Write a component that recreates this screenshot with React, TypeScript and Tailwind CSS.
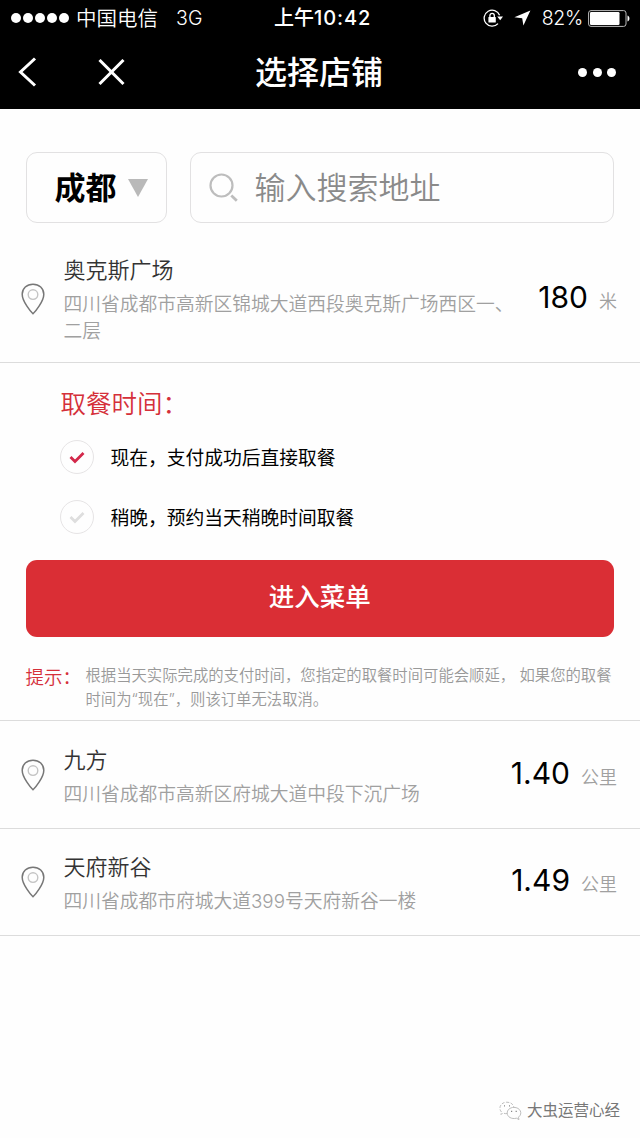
import React from "react";

type Store = {
    name: string;
    address: string;
    distance: string;
    unit: string;
};

const currentStore: Store = {
    name: "奥克斯广场",
    address: "四川省成都市高新区锦城大道西段奥克斯广场西区一、二层",
    distance: "180",
    unit: "米",
};

const nearbyStores: Store[] = [
    {
        name: "九方",
        address: "四川省成都市高新区府城大道中段下沉广场",
        distance: "1.40",
        unit: "公里",
    },
    {
        name: "天府新谷",
        address: "四川省成都市府城大道399号天府新谷一楼",
        distance: "1.49",
        unit: "公里",
    },
];

const pickupOptions = [
    { label: "现在，支付成功后直接取餐", selected: true },
    { label: "稍晚，预约当天稍晚时间取餐", selected: false },
];

function StatusBar() {
    return (
        <div className="flex h-9 items-center text-[20.5px] leading-9">
            <div className="flex w-[274px] items-center pl-[11px]">
                <div className="flex gap-[2px]">
                    {[...Array(5)].map((_, i) => (
                        <span key={i} className="h-[10px] w-[10px] rounded-full bg-white" />
                    ))}
                </div>
                <span className="ml-[7px] pt-px font-[350]">中国电信</span>
                <span className="ml-[18px] text-[19.5px] font-[350] tracking-[0.3px]">3G</span>
            </div>
            <div className="flex-1 text-[20px] font-medium whitespace-nowrap">
                上午<span className="tracking-[0.9px]">10:42</span>
            </div>
            <div className="flex items-center pr-[9px]">
                <svg width="20" height="19" viewBox="0 0 20 19" fill="none">
                    <path d="M16.6 6.2A8 8 0 1 0 15 14.6" stroke="white" strokeWidth="1.3" />
                    <path d="M14.2 7.4h5.8l-2.8 3.8z" fill="white" />
                    <rect x="5.4" y="8" width="7.4" height="5.6" rx="0.6" fill="white" />
                    <path d="M6.9 8.2V6.6a2.2 2.2 0 0 1 4.4 0v1.6" stroke="white" strokeWidth="1.3" />
                </svg>
                <svg className="ml-[11px]" width="17" height="16" viewBox="0 0 17 16">
                    <path d="M16.4 0.4L0.4 7.2L8.2 8.2L9.4 15.6Z" fill="white" />
                </svg>
                <span className="ml-[11px] text-[19.5px] font-[350] tracking-[-0.3px]">82%</span>
                <svg className="ml-[5px]" width="43" height="17" viewBox="0 0 43 17" fill="none">
                    <rect x="0.6" y="0.6" width="37.4" height="15.8" rx="2.4" stroke="#bbb" strokeWidth="1" />
                    <rect x="2" y="2" width="29.5" height="13" rx="1.2" fill="white" />
                    <path d="M39.5 5.5c2.6 0.8 2.6 5.2 0 6z" fill="white" />
                </svg>
            </div>
        </div>
    );
}

function NavBar() {
    return (
        <div className="flex h-[73px] items-center justify-between pr-[23.5px] pl-[17px]">
            <div className="flex w-[210px] items-center">
                <svg width="20" height="32" viewBox="0 0 20 32" fill="none" stroke="white" strokeWidth="3">
                    <path d="M18 1.5L3.5 15L18 28.5" />
                </svg>
                <svg className="ml-[61px]" width="27" height="27" viewBox="0 0 27 27" fill="none" stroke="white" strokeWidth="3">
                    <path d="M1.5 1L25.5 25M25.5 1L1.5 25" />
                </svg>
            </div>
            <h1 className="text-[32px] leading-none font-medium whitespace-nowrap">选择店铺</h1>
            <div className="flex w-[205.5px] justify-end gap-[5.5px] pb-px">
                {[...Array(3)].map((_, i) => (
                    <span key={i} className="h-[9px] w-[9px] rounded-full bg-white" />
                ))}
            </div>
        </div>
    );
}

function PinIcon() {
    return (
        <svg width="24" height="32" viewBox="0 0 24 32" fill="none">
            <path
                d="M12 30.8C10.2 29.2 1.2 18.6 1.2 11.2C1.2 5.4 5.8 1.2 12 1.2S22.8 5.4 22.8 11.2C22.8 18.6 13.8 29.2 12 30.8Z"
                stroke="#777"
                strokeWidth="1.5"
            />
            <circle cx="12" cy="11.6" r="4.8" stroke="#c4c4c4" strokeWidth="1.4" />
        </svg>
    );
}

function StoreRow({ store }: { store: Store }) {
    return (
        <div className="flex items-center pr-[23px] pl-[21px]">
            <div className="pb-[2px]">
                <PinIcon />
            </div>
            <div className="ml-[18.5px] w-[452px]">
                <div className="text-[22px] leading-[32px] font-[350] text-[#333]">{store.name}</div>
                <div className="mt-[5px] text-[18.75px] leading-[27px] font-[350] text-[#a0a0a0]">{store.address}</div>
            </div>
            <div className="flex flex-1 items-baseline justify-end pb-[4px] whitespace-nowrap">
                <span className="text-[30px] leading-[32px] text-black">{store.distance}</span>
                <span className="ml-[11px] text-[18px] font-[350] text-[#a0a0a0]">{store.unit}</span>
            </div>
        </div>
    );
}

function CheckCircle({ selected }: { selected: boolean }) {
    return (
        <span className="flex h-[34px] w-[34px] items-center justify-center rounded-full border-[1.5px] border-[#e6e4e5]">
            <svg width="16" height="13" viewBox="0 0 16 13" fill="none">
                <path d="M1.5 6L6 10.5L14.5 2" stroke={selected ? "#d3284a" : "#dedede"} strokeWidth="2.8" />
            </svg>
        </span>
    );
}

export default function App() {
    return (
        <div className="flex h-[1138px] w-[640px] flex-col overflow-hidden bg-[#fefefe] font-['Inter','Noto_Sans_CJK_SC',sans-serif]">
            <header className="h-[109px] shrink-0 bg-black text-white">
                <StatusBar />
                <NavBar />
            </header>

            {/* City picker and address search */}
            <div className="mt-[43px] flex h-[71px] shrink-0 gap-[22.5px] pr-[26px] pl-[25.5px]">
                <button className="flex w-[141.5px] items-center rounded-[11px] border-[1.5px] border-[#e2e1e2] pl-[28px]">
                    <span className="text-[31px] leading-none font-bold">成都</span>
                    <svg className="ml-[11px]" width="20" height="18" viewBox="0 0 20 18">
                        <path d="M0 0H20L10 18Z" fill="#b9b9b9" />
                    </svg>
                </button>
                <div className="flex flex-1 items-center rounded-[11px] border-[1.5px] border-[#e2e1e2] pl-[18px]">
                    <svg width="30" height="30" viewBox="0 0 30 30" fill="none">
                        <circle cx="12.5" cy="12.5" r="11" stroke="#bdbdbd" strokeWidth="2.2" />
                        <path d="M22.3 22.6L27.8 27.8" stroke="#bdbdbd" strokeWidth="2.8" />
                    </svg>
                    <span className="ml-[16px] text-[31px] leading-none font-[350] text-[#8a8a8a]">输入搜索地址</span>
                </div>
            </div>

            <section className="h-[140px] shrink-0 border-b-[1.5px] border-[#dcdcdc] pt-[31px]">
                <StoreRow store={currentStore} />
            </section>

            {/* Pickup time */}
            <section className="flex h-[358px] shrink-0 flex-col border-b-[1.5px] border-[#dcdcdc] pr-[26px] pl-[25.5px]">
                <h2 className="mt-[23px] flex pl-[35px] text-[25.5px] leading-[36px] font-[350] text-[#d5303a]">
                    <span>取餐时间</span>
                    <span className="[font-feature-settings:'halt']">：</span>
                </h2>
                <div className="mt-[18px] flex flex-col gap-[26px] pl-[34px]">
                    {pickupOptions.map((option) => (
                        <div key={option.label} className="flex h-[34px] items-center gap-[17px]">
                            <CheckCircle selected={option.selected} />
                            <span className="pt-[4px] text-[18.75px] leading-[30px] text-black">{option.label}</span>
                        </div>
                    ))}
                </div>
                <button className="mt-[25.5px] h-[77px] w-full shrink-0 rounded-[11px] bg-[#da2e35] pb-[2px] text-[25.5px] leading-[72px] font-medium text-white">
                    进入菜单
                </button>
                <div className="mt-[27.5px] flex items-start">
                    <div className="-mt-px flex w-[60px] shrink-0 text-[18.5px] leading-[28px] font-[350] text-[#d5303a]">
                        <span>提示</span>
                        <span className="[font-feature-settings:'halt']">：</span>
                    </div>
                    <p className="text-[15.35px] leading-[24px] font-[350] whitespace-nowrap text-[#999]">
                        根据当天实际完成的支付时间，您指定的取餐时间可能会顺延， 如果您的取餐
                        <br />
                        时间为“现在”，则该订单无法取消。
                    </p>
                </div>
            </section>

            {nearbyStores.map((store) => (
                <section key={store.name} className="h-[107.5px] shrink-0 border-b-[1.5px] border-[#dcdcdc] pt-[22.5px]">
                    <StoreRow store={store} />
                </section>
            ))}

            <footer className="mt-auto flex items-center justify-end pr-[20px] pb-[15px]">
                <svg width="23" height="20" viewBox="0 0 23 20" fill="none" stroke="#b5b5b5" strokeWidth="0.9">
                    <path d="M8 12.6C6.6 12.8 5.4 12.5 4.4 12.1L1.8 13.4L2.5 11C-1 7.5 1.5 1.2 7.8 1.2C11.8 1.2 14.4 3.4 14.8 6.2" strokeDasharray="3 1.5" />
                    <path d="M15 6.4C10.6 6.4 8.2 9.2 8.2 12C8.2 16 12.6 18.4 17.4 17.2L20 18.6L19.4 16.2C24.4 12.4 21 6.4 15 6.4Z" />
                    <path d="M5 4.8h1M10 4.8h1M12 10.4h1.2M16.6 10.4h1.2" stroke="#888" strokeWidth="1.3" />
                </svg>
                <span className="ml-[5px] text-[15.5px] leading-[24px] text-[#777]">大虫运营心经</span>
            </footer>
        </div>
    );
}
